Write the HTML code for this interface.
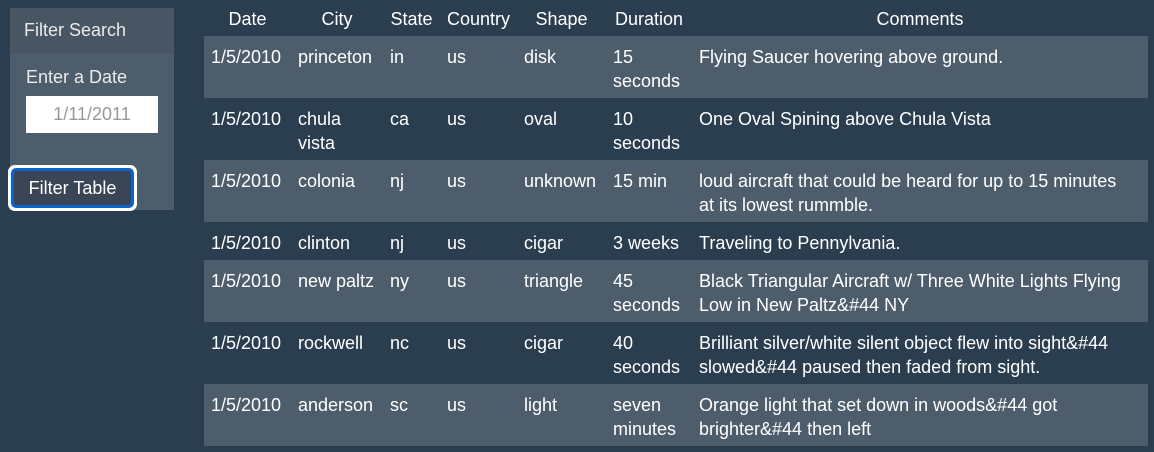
<!DOCTYPE html>
<html><head><meta charset="utf-8"><style>
html,body{margin:0;padding:0;background:#2b3e50;width:1154px;height:452px;overflow:hidden;font-family:"Liberation Sans",sans-serif;color:#ebebeb;font-size:18px}
.panel{position:absolute;left:10px;top:8px;width:164px;height:202px;background:#4e5d6c}
.ph{height:45px;background:#485563;line-height:44px;padding-left:14px;color:#ebebeb}
.lbl{position:absolute;left:16px;top:59px;}
.inp{position:absolute;left:16px;top:88px;width:132px;height:37px;background:#fff;color:#999;text-align:center;line-height:37px;}
.btn{position:absolute;left:8px;top:165px;width:125px;height:42px;border:2px solid #fff;border-radius:7px;background:#fff}
.btn div{position:absolute;left:1px;top:1px;right:1px;bottom:1px;border:3px solid #0d63c9;border-radius:5px;background:#3a4656;color:#fff;text-align:center;line-height:34px;}
table{position:absolute;left:204px;top:0;width:944px;border-collapse:collapse;table-layout:fixed}
th{height:36px;padding:2px 0 0 0;font-weight:normal;text-align:center;vertical-align:middle;color:#fff;box-sizing:border-box}
td{padding:9px 0 5px 7px;line-height:24px;vertical-align:top;white-space:nowrap;color:#fff}
tbody tr:nth-child(odd){background:#4e5d6c}
</style></head><body>
<div class="panel"><div class="ph">Filter Search</div><div class="lbl">Enter a Date</div><div class="inp">1/11/2011</div></div>
<div class="btn"><div>Filter Table</div></div>
<table>
<colgroup><col style="width:87px"><col style="width:92px"><col style="width:57px"><col style="width:77px"><col style="width:89px"><col style="width:86px"><col style="width:456px"></colgroup>
<thead><tr><th>Date</th><th>City</th><th>State</th><th>Country</th><th>Shape</th><th>Duration</th><th>Comments</th></tr></thead>
<tbody>
<tr><td>1/5/2010</td><td>princeton</td><td>in</td><td>us</td><td>disk</td><td>15<br>seconds</td><td>Flying Saucer hovering above ground.</td></tr>
<tr><td>1/5/2010</td><td>chula<br>vista</td><td>ca</td><td>us</td><td>oval</td><td>10<br>seconds</td><td>One Oval Spining above Chula Vista</td></tr>
<tr><td>1/5/2010</td><td>colonia</td><td>nj</td><td>us</td><td>unknown</td><td>15 min</td><td>loud aircraft that could be heard for up to 15 minutes<br>at its lowest rummble.</td></tr>
<tr><td>1/5/2010</td><td>clinton</td><td>nj</td><td>us</td><td>cigar</td><td>3 weeks</td><td>Traveling to Pennylvania.</td></tr>
<tr><td>1/5/2010</td><td>new paltz</td><td>ny</td><td>us</td><td>triangle</td><td>45<br>seconds</td><td>Black Triangular Aircraft w/ Three White Lights Flying<br>Low in New Paltz&amp;#44 NY</td></tr>
<tr><td>1/5/2010</td><td>rockwell</td><td>nc</td><td>us</td><td>cigar</td><td>40<br>seconds</td><td>Brilliant silver/white silent object flew into sight&amp;#44<br>slowed&amp;#44 paused then faded from sight.</td></tr>
<tr><td>1/5/2010</td><td>anderson</td><td>sc</td><td>us</td><td>light</td><td>seven<br>minutes</td><td>Orange light that set down in woods&amp;#44 got<br>brighter&amp;#44 then left</td></tr>
</tbody></table>
</body></html>
